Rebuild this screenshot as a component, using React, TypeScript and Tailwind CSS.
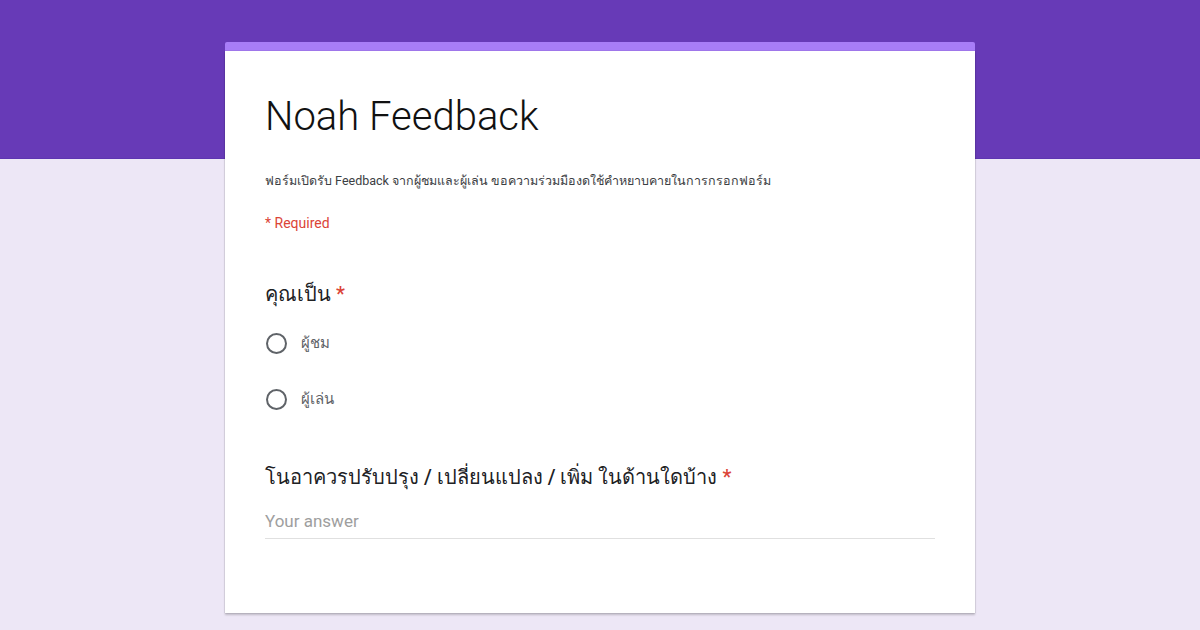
export default function App() {
  return (
    <div className="relative w-[1200px] h-[630px] overflow-hidden bg-[#ede7f6] font-['Roboto',sans-serif]">
      <div className="h-[159px] bg-[#673ab7] border-b border-[#5e35b1]" />
      <div className="absolute left-[225px] top-[42px] w-[750px]">
        <div className="h-[9px] rounded-t-[2px] bg-[#a87df7]" />
        <div className="bg-white h-[562px] px-10 pt-[42px] shadow-[0_2px_2px_rgba(0,0,0,0.2),0_0_1px_rgba(0,0,0,0.3)]">
          <h1 className="text-[40px] leading-[48px] font-light text-[#111]">Noah Feedback</h1>
          <p className="mt-[31px] text-[12.5px] text-[#3c4043]">
            ฟอร์มเปิดรับ Feedback จากผู้ชมและผู้เล่น ขอความร่วมมืองดใช้คำหยาบคายในการกรอกฟอร์ม
          </p>
          <p className="mt-[22px] text-[14px] text-[#db4437]">* Required</p>

          <div className="mt-[45px]">
            <div className="text-[20px] font-medium text-[#202124]">
              คุณเป็น <span className="text-[#db4437]">*</span>
            </div>
            <div className="mt-[23px] flex flex-col gap-[34px]">
              {["ผู้ชม", "ผู้เล่น"].map((o) => (
                <label key={o} className="flex items-center gap-[14px]">
                  <span className="ml-[1px] w-[21px] h-[21px] rounded-full border-2 border-[#5f6368]" />
                  <span className="text-[15px] text-[#5f6368]">{o}</span>
                </label>
              ))}
            </div>
          </div>

          <div className="mt-[51px]">
            <div className="text-[20px] font-medium text-[#202124]">
              โนอาควรปรับปรุง / เปลี่ยนแปลง / เพิ่ม ในด้านใดบ้าง <span className="text-[#db4437]">*</span>
            </div>
            <div className="mt-[17px] border-b border-[#e0e0e0] pb-[4px] text-[17px] text-[#9e9e9e]">
              Your answer
            </div>
          </div>
        </div>
      </div>
    </div>
  );
}
